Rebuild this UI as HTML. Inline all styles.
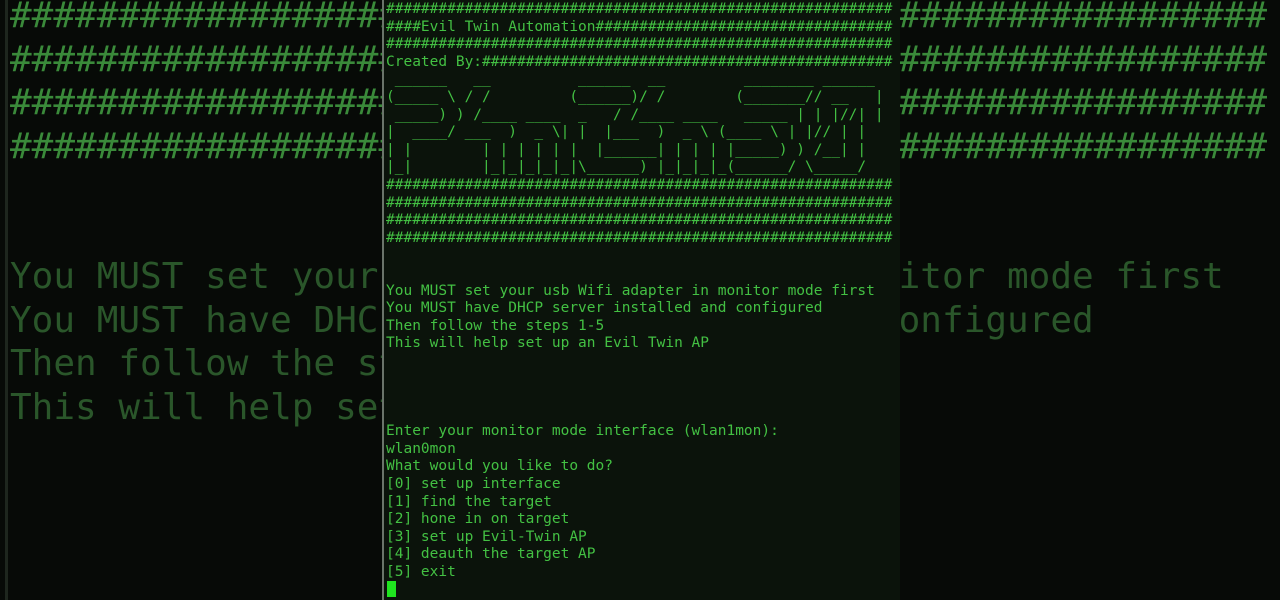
<!DOCTYPE html>
<html><head><meta charset="utf-8"><style>
html,body{margin:0;padding:0;width:1280px;height:600px;overflow:hidden;background:#070a07;}
.side{position:absolute;left:10px;width:1258px;overflow:hidden;font-family:"DejaVu Sans Mono","Liberation Mono",monospace;font-size:36px;line-height:43.5px;white-space:pre;}
.h{color:#3a8a3a;top:-6px;}
.t{color:#2a562a;top:255px;}
.lb{position:absolute;left:5px;top:0;width:3px;height:600px;background:#1e261e;}
.term{position:absolute;left:382px;top:0;width:518px;height:600px;background:#0b130b;border-left:2px solid #6a746a;box-sizing:border-box;overflow:hidden;}
.term pre{margin:0;position:absolute;left:2px;top:1px;font-family:"DejaVu Sans Mono","Liberation Mono",monospace;font-size:14.5px;line-height:17.6px;color:#43c043;}
.cur{position:absolute;left:3px;top:581px;width:9px;height:16px;background:#1fe41f;}
</style></head><body>
<div class="lb"></div>
<div class="side h">##########################################################
##########################################################
##########################################################
##########################################################</div>
<div class="side t">You MUST set your usb Wifi adapter in monitor mode first
You MUST have DHCP server installed and configured
Then follow the steps 1-5
This will help set up an Evil Twin AP</div>
<div class="term"><pre>##########################################################
####Evil Twin Automation##################################
##########################################################
Created By:###############################################
 ______   __          ______  __         ________ ______ 
(_____ \ / /         (______)/ /        (_______// __   |
 _____) ) /____ ____  _   / /____ ____   _____ | | |//| |
|  ____/ ___  )  _ \| |  |___  )  _ \ (____ \ | |// | |
| |        | | | | | |  |______| | | | |_____) ) /__| |
|_|        |_|_|_|_|_|\______) |_|_|_|_(______/ \_____/
##########################################################
##########################################################
##########################################################
##########################################################


You MUST set your usb Wifi adapter in monitor mode first
You MUST have DHCP server installed and configured
Then follow the steps 1-5
This will help set up an Evil Twin AP




Enter your monitor mode interface (wlan1mon):
wlan0mon
What would you like to do?
[0] set up interface
[1] find the target
[2] hone in on target
[3] set up Evil-Twin AP
[4] deauth the target AP
[5] exit</pre><div class="cur"></div></div>
</body></html>
